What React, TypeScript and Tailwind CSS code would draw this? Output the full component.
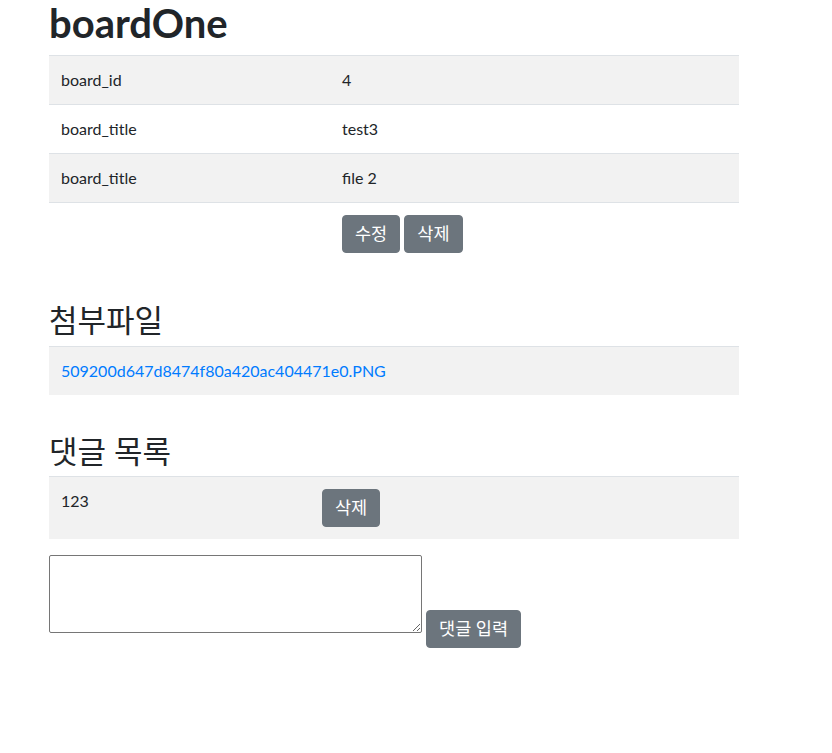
const font = { fontFamily: 'Lato, "Noto Sans CJK KR", sans-serif' };

const rows = [
  { label: "board_id", value: "4" },
  { label: "board_title", value: "test3" },
  { label: "board_title", value: "file 2" },
];

function Btn({ children }: { children: React.ReactNode }) {
  return (
    <button className="inline-block h-[38px] rounded-[4px] border border-[#6c757d] bg-[#6c757d] px-3 py-[6px] text-[17.5px] leading-6 text-white align-middle">
      {children}
    </button>
  );
}

export default function App() {
  return (
    <div className="min-h-[753px] bg-white text-[#212529] text-base leading-6" style={font}>
      <div className="ml-[49px] w-[690px]">
        <h1 className="mb-2 text-[40px] font-bold leading-[47px]">boardOne</h1>

        <table className="mb-4 w-full border-collapse">
          <tbody>
            {rows.map((row, i) => (
              <tr key={i} className={i % 2 === 0 ? "bg-[#f2f2f2]" : ""}>
                <td className="w-[281px] border-t border-[#dee2e6] p-3 align-top">{row.label}</td>
                <td className="border-t border-[#dee2e6] p-3 align-top">{row.value}</td>
              </tr>
            ))}
            <tr>
              <td className="border-t border-[#dee2e6] p-3"></td>
              <td className="border-t border-[#dee2e6] p-3">
                <Btn>수정</Btn> <Btn>삭제</Btn>
              </td>
            </tr>
          </tbody>
        </table>

        <h3 className="mt-[39px] mb-2 text-[31px] leading-[33.6px]">첨부파일</h3>
        <table className="mb-4 w-full border-collapse">
          <tbody>
            <tr className="bg-[#f2f2f2]">
              <td className="border-t border-[#dee2e6] p-3">
                <a href="#" className="text-[#007bff]">509200d647d8474f80a420ac404471e0.PNG</a>
              </td>
            </tr>
          </tbody>
        </table>

        <h3 className="mt-[40px] mb-2 text-[31px] leading-[33.6px]">댓글 목록</h3>
        <table className="mb-4 w-full border-collapse">
          <tbody>
            <tr className="bg-[#f2f2f2]">
              <td className="w-[261px] border-t border-[#dee2e6] p-3 align-top">123</td>
              <td className="border-t border-[#dee2e6] p-3 align-top">
                <Btn>삭제</Btn>
              </td>
            </tr>
          </tbody>
        </table>

        <div>
          <textarea className="inline-block h-[78px] w-[373px] rounded-[2px] border border-[#767676] align-baseline"></textarea>{" "}
          <button className="inline-block h-[38px] rounded-[4px] border border-[#6c757d] bg-[#6c757d] px-3 py-[6px] text-[17.5px] leading-6 text-white align-[-2px]">
            댓글 입력
          </button>
        </div>
      </div>
    </div>
  );
}
